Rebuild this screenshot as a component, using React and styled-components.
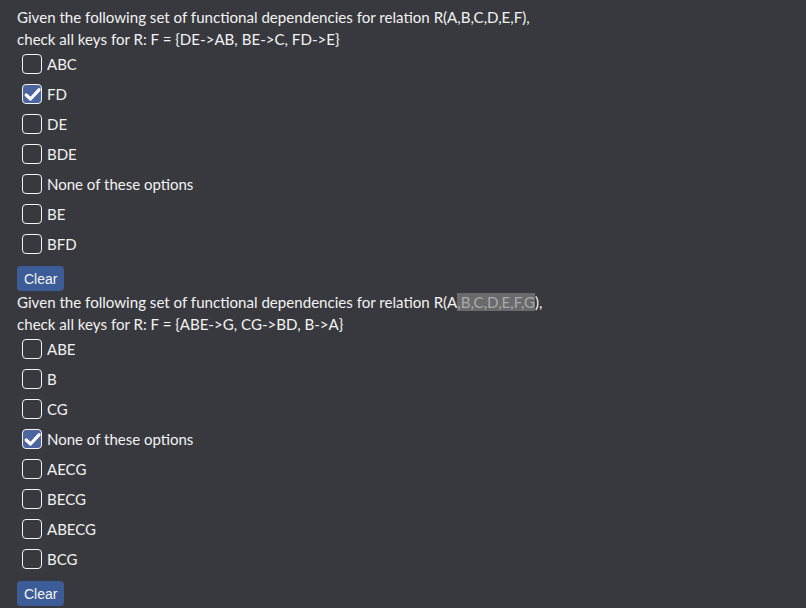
import { useState } from "react";
import styled, { createGlobalStyle } from "styled-components";

const Global = createGlobalStyle`
  html, body {
    margin: 0;
    background: #38393e;
  }
  body {
    font-family: Lato, "Noto Sans", sans-serif;
    color: #f2f2f2;
  }
`;

const Page = styled.div`
  padding: 6px 17px 0;
`;

const Question = styled.div`
  display: flex;
  flex-direction: column;
  align-items: flex-start;
`;

const Prompt = styled.p`
  margin: 0;
  font-size: 15.1px;
  line-height: 22px;
`;

const Faded = styled.span`
  background: #6a6a6c;
  color: #a9a9ab;
`;

const Options = styled.div`
  display: flex;
  flex-direction: column;
  margin-top: -1px;
  padding-left: 5px;
`;

const Option = styled.label`
  display: flex;
  align-items: center;
  gap: 5px;
  height: 30px;
  font-size: 15px;
  cursor: pointer;
`;

const Box = styled.span`
  box-sizing: border-box;
  width: 20px;
  height: 20px;
  border: 1.5px solid #f4f4f4;
  border-radius: 4px;
  background: ${({ checked }) => (checked ? "#4c649f" : "transparent")};
  display: flex;
  align-items: center;
  justify-content: center;
`;

const ClearButton = styled.button`
  margin-top: 7px;
  height: 25px;
  padding: 0 7px;
  border: none;
  border-radius: 4px;
  background: #3c5c97;
  color: #f4f4f4;
  font-family: "Liberation Sans", Arial, sans-serif;
  font-size: 14px;
  cursor: pointer;
`;

const Check = () => (
  <svg width="17" height="15" viewBox="0 0 17 15">
    <path d="M2.2 8 L6.5 12 L15 2.8" fill="none" stroke="#fff" strokeWidth="3.2" strokeLinecap="round" strokeLinejoin="round" />
  </svg>
);

const questions = [
  {
    prompt: (
      <>
        Given the following set of functional dependencies for relation R(A,B,C,D,E,F),
        <br />
        check all keys for R: F = {"{DE->AB, BE->C, FD->E}"}
      </>
    ),
    options: ["ABC", "FD", "DE", "BDE", "None of these options", "BE", "BFD"],
    checked: ["FD"],
  },
  {
    prompt: (
      <>
        Given the following set of functional dependencies for relation R(A<Faded>,B,C,D,E,F,G</Faded>),
        <br />
        check all keys for R: F = {"{ABE->G, CG->BD, B->A}"}
      </>
    ),
    options: ["ABE", "B", "CG", "None of these options", "AECG", "BECG", "ABECG", "BCG"],
    checked: ["None of these options"],
  },
];

const QuestionBlock = ({ q }) => {
  const [sel, setSel] = useState(q.checked);
  const toggle = (o) =>
    setSel((s) => (s.includes(o) ? s.filter((x) => x !== o) : [...s, o]));
  return (
    <Question>
      <Prompt>{q.prompt}</Prompt>
      <Options>
        {q.options.map((o) => (
          <Option key={o} onClick={() => toggle(o)}>
            <Box checked={sel.includes(o)}>{sel.includes(o) && <Check />}</Box>
            {o}
          </Option>
        ))}
      </Options>
      <ClearButton onClick={() => setSel([])}>Clear</ClearButton>
    </Question>
  );
};

export default function App() {
  return (
    <Page>
      <Global />
      {questions.map((q, i) => (
        <QuestionBlock key={i} q={q} />
      ))}
    </Page>
  );
}
